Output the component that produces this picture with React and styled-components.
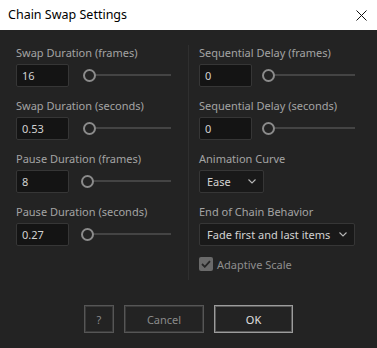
import React from 'react'
import styled, { createGlobalStyle } from 'styled-components'

const GlobalStyle = createGlobalStyle`
  html, body {
    margin: 0;
    padding: 0;
    background: #232323;
  }
  body {
    font-family: "Noto Sans", "Open Sans", sans-serif;
  }
`;

// slider fields: value + max decide where the knob sits
const leftFields = [
  { label: 'Swap Duration (frames)', value: '16', num: 16, max: 300 },
  { label: 'Swap Duration (seconds)', value: '0.53', num: 0.53, max: 10 },
  { label: 'Pause Duration (frames)', value: '8', num: 8, max: 300 },
  { label: 'Pause Duration (seconds)', value: '0.27', num: 0.27, max: 10 },
];

const rightFields = [
  { label: 'Sequential Delay (frames)', value: '0', num: 0, max: 300 },
  { label: 'Sequential Delay (seconds)', value: '0', num: 0, max: 10 },
];

function CloseIcon() {
  return (
    <svg width="11" height="11" viewBox="0 0 11 11">
      <path d="M0.5 0.5 L10.5 10.5 M10.5 0.5 L0.5 10.5" stroke="#111" strokeWidth="1" />
    </svg>
  );
}

function Chevron() {
  return (
    <svg width="8" height="5" viewBox="0 0 8 5">
      <path d="M0.5 0.5 L4 4 L7.5 0.5" fill="none" stroke="#b8b8b8" strokeWidth="1.1" />
    </svg>
  );
}

function SliderField({ label, value, num, max }) {
  const offset = Math.round((num / max) * 75);
  return (
    <Field>
      <Label>{label}</Label>
      <ControlRow>
        <NumberInput type="text" value={value} readOnly />
        <Slider>
          <Track style={{ left: offset + 6 }} />
          <Knob style={{ left: offset }} />
        </Slider>
      </ControlRow>
    </Field>
  );
}

export default function App() {
  return (
    <Window>
      <GlobalStyle />
      <TitleBar>
        <Title>Chain Swap Settings</Title>
        <CloseButton><CloseIcon /></CloseButton>
      </TitleBar>
      <Body>
        <Columns>
          <Column>
            {leftFields.map((f) => <SliderField key={f.label} {...f} />)}
          </Column>
          <Divider />
          <Column>
            {rightFields.map((f) => <SliderField key={f.label} {...f} />)}
            <Field>
              <Label>Animation Curve</Label>
              <Select width={65}>
                <span>Ease</span>
                <Chevron />
              </Select>
            </Field>
            <Field>
              <Label>End of Chain Behavior</Label>
              <Select width={156}>
                <span>Fade first and last items</span>
                <Chevron />
              </Select>
            </Field>
            <CheckRow>
              <CheckBox>
                <svg width="10" height="8" viewBox="0 0 10 8">
                  <path d="M1 4 L3.8 6.8 L9 1.2" fill="none" stroke="#262626" strokeWidth="1.8" />
                </svg>
              </CheckBox>
              <CheckLabel>Adaptive Scale</CheckLabel>
            </CheckRow>
          </Column>
        </Columns>
        <Footer>
          <Button width={30}>?</Button>
          <Button width={80}>Cancel</Button>
          <Button width={79} primary>OK</Button>
        </Footer>
      </Body>
    </Window>
  );
}

const Window = styled.div`
  width: 377px;
  height: 348px;
  display: flex;
  flex-direction: column;
  background: #232323;
  overflow: hidden;
`;
const TitleBar = styled.div`
  height: 30px;
  background: #fff;
  display: flex;
  align-items: center;
  justify-content: space-between;
  padding: 0 10px 0 8px;
  box-sizing: border-box;
`;
const Title = styled.div`
  font-size: 12.5px;
  color: #000;
  margin-top: -1px;
`;
const CloseButton = styled.div`
  display: flex;
  align-items: center;
`;
const Body = styled.div`
  flex: 1;
  display: flex;
  flex-direction: column;
  padding: 15px 0 0 16px;
`;
const Columns = styled.div`
  display: flex;
  align-items: stretch;
`;
const Column = styled.div`
  width: 156px;
  display: flex;
  flex-direction: column;
  gap: 11px;
  &:first-child {
    width: 155px;
  }
`;
const Divider = styled.div`
  width: 1px;
  background: #2f2f2f;
  margin: 0 10px 0 17px;
  height: 235px;
`;
const Field = styled.div`
  display: flex;
  flex-direction: column;
  gap: 3px;
`;
const Label = styled.div`
  font-size: 11px;
  line-height: 16px;
  height: 16px;
  color: #a3a3a3;
  white-space: nowrap;
`;
const ControlRow = styled.div`
  display: flex;
  align-items: center;
  height: 23px;
`;
const NumberInput = styled.input`
  width: 53px;
  height: 23px;
  box-sizing: border-box;
  background: #141414;
  border: 1px solid #363636;
  border-radius: 2px;
  padding: 0 0 0 5px;
  margin: 0;
  color: #d2d2d2;
  font-family: "Noto Sans", sans-serif;
  font-size: 11px;
  outline: none;
`;
const Slider = styled.div`
  position: relative;
  flex: 1;
  height: 23px;
  margin-left: 10px;
`;
const Track = styled.div`
  position: absolute;
  right: 0;
  top: 10px;
  height: 2px;
  background: #444;
`;
const Knob = styled.div`
  position: absolute;
  top: 5px;
  width: 13px;
  height: 13px;
  box-sizing: border-box;
  border: 2px solid #8b8b8b;
  border-radius: 50%;
  background: #232323;
`;
const Select = styled.div`
  width: ${(p) => p.width}px;
  height: 23px;
  box-sizing: border-box;
  background: #191919;
  border: 1px solid #363636;
  border-radius: 2px;
  display: flex;
  align-items: center;
  justify-content: space-between;
  padding: 0 7px 0 7px;
  font-size: 11px;
  color: #d2d2d2;
`;
const CheckRow = styled.div`
  display: flex;
  align-items: center;
  gap: 4px;
  height: 14px;
`;
const CheckBox = styled.div`
  width: 14px;
  height: 14px;
  border-radius: 2px;
  background: #6a6a6a;
  display: flex;
  align-items: center;
  justify-content: center;
`;
const CheckLabel = styled.div`
  font-size: 11px;
  color: #8e8e8e;
`;
const Footer = styled.div`
  display: flex;
  justify-content: center;
  gap: 10px;
  margin: 25px 0 0 -16px;
`;
const Button = styled.div`
  width: ${(p) => p.width}px;
  height: 28px;
  box-sizing: border-box;
  border: 1px solid ${(p) => (p.primary ? '#9c9c9c' : '#565656')};
  box-shadow: inset 0 0 0 1px ${(p) => (p.primary ? '#5a5a5a' : '#3a3a3a')};
  display: flex;
  align-items: center;
  justify-content: center;
  font-size: 11px;
  color: ${(p) => (p.primary ? '#e0e0e0' : '#8a8a8a')};
`;
